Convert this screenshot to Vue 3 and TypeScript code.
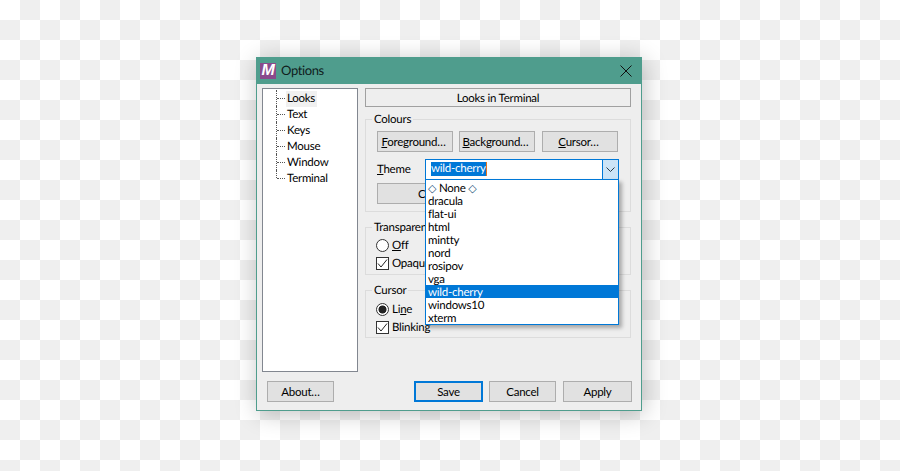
<script setup lang="ts">
import { ref } from 'vue';

const pages = ['Looks', 'Text', 'Keys', 'Mouse', 'Window', 'Terminal'];
const themes = ['dracula', 'flat-ui', 'html', 'mintty', 'nord', 'rosipov', 'vga', 'wild-cherry', 'windows10', 'xterm'];
const selected = ref('wild-cherry');
</script>

<template>
  <div class="desktop">
    <div class="window">
      <div class="titlebar">
        <span class="logo">M</span>
        <span class="title">Options</span>
        <svg class="close" width="12" height="12" viewBox="0 0 12 12">
          <path d="M0.5 0.5 L11.5 11.5 M11.5 0.5 L0.5 11.5" stroke="#111" stroke-width="1" fill="none" />
        </svg>
      </div>
      <div class="content">
        <div class="main">
          <ul class="tree">
            <li v-for="(page, index) in pages" :key="page" class="tree-row">
              <span :class="['tree-label', { current: index === 0 }]">{{ page }}</span>
            </li>
          </ul>
          <div class="panel">
            <div class="heading">Looks in Terminal</div>

            <fieldset class="group colours">
              <legend>Colours</legend>
              <div class="colour-buttons">
                <button class="btn"><u>F</u>oreground…</button>
                <button class="btn"><u>B</u>ackground…</button>
                <button class="btn"><u>C</u>ursor…</button>
              </div>
              <div class="theme-row">
                <label class="theme-label"><u>T</u>heme</label>
                <div class="combo">
                  <span class="combo-value"><span class="combo-selected">{{ selected }}</span><i class="caret"></i></span>
                  <span class="combo-arrow">
                    <svg width="9" height="5" viewBox="0 0 9 5">
                      <path d="M0.5 0.5 L4.5 4.5 L8.5 0.5" stroke="#2b3a46" stroke-width="1" fill="none" />
                    </svg>
                  </span>
                  <ul class="dropdown">
                    <li class="option none"><span class="diamond">◇</span> None <span class="diamond">◇</span></li>
                    <li
                      v-for="theme in themes"
                      :key="theme"
                      :class="['option', { active: theme === selected }]"
                    >
                      {{ theme }}
                    </li>
                  </ul>
                </div>
              </div>
              <button class="btn wide">Colour Scheme Designer…</button>
            </fieldset>

            <fieldset class="group transparency">
              <legend>Transparency</legend>
              <label class="choice first"><span class="radio"></span><span><u>O</u>ff</span></label>
              <label class="choice">
                <span class="check">
                  <svg width="11" height="11" viewBox="0 0 11 11">
                    <path d="M1 5.5 L4 9 L10 1.5" stroke="#222" stroke-width="1" fill="none" />
                  </svg>
                </span>
                <span>Opaque</span>
              </label>
            </fieldset>

            <fieldset class="group cursor">
              <legend>Cursor</legend>
              <label class="choice first"><span class="radio on"></span><span>Li<u>n</u>e</span></label>
              <label class="choice">
                <span class="check">
                  <svg width="11" height="11" viewBox="0 0 11 11">
                    <path d="M1 5.5 L4 9 L10 1.5" stroke="#222" stroke-width="1" fill="none" />
                  </svg>
                </span>
                <span>Blinkin<u>g</u></span>
              </label>
            </fieldset>
          </div>
        </div>
        <div class="footer">
          <button class="btn about">About…</button>
          <span class="spacer"></span>
          <button class="btn save">Save</button>
          <button class="btn cancel">Cancel</button>
          <button class="btn apply">Apply</button>
        </div>
      </div>
    </div>
  </div>
</template>

<style scoped>
.desktop {
  position: relative;
  width: 900px;
  height: 471px;
  overflow: hidden;
  background-color: #fff;
  background-image: conic-gradient(#efefef 25%, #fff 25% 50%, #efefef 50% 75%, #fff 75%);
  background-size: 40px 40px;
  font-family: "Lato", "Noto Sans", sans-serif;
  font-size: 11.5px;
  letter-spacing: -0.25px;
  text-rendering: geometricPrecision;
  color: #000;
}

/* the dialog sits on the desktop like a real window */
.window {
  position: absolute;
  left: 256px;
  top: 57px;
  width: 386px;
  height: 354px;
  box-sizing: border-box;
  display: flex;
  flex-direction: column;
  border: 1px solid #4f9d8d;
  background: #eeeeee;
  box-shadow: 2px 3px 22px rgba(0, 0, 0, 0.24);
}

.titlebar {
  height: 26px;
  flex: none;
  display: flex;
  align-items: center;
  padding: 0 9px 0 3px;
  background: #4f9d8d;
}

.logo {
  width: 16px;
  height: 16px;
  display: flex;
  align-items: center;
  justify-content: center;
  background: #8a4a8c;
  color: #fff;
  font-family: "Liberation Sans", sans-serif;
  font-size: 16px;
  font-weight: 700;
  font-style: italic;
  line-height: 16px;
}

.title {
  flex: 1;
  margin-left: 5px;
  margin-top: -2px;
  font-size: 13px;
  letter-spacing: -0.4px;
  color: #10201c;
}

.close {
  flex: none;
}

.content {
  flex: 1;
  display: flex;
  flex-direction: column;
  padding: 4px 9px 0 5px;
}

.main {
  display: flex;
  gap: 7px;
  height: 284px;
}

.tree {
  width: 96px;
  box-sizing: border-box;
  margin: 0;
  padding: 1px 0 0 13px;
  list-style: none;
  border: 1px solid #828790;
  background: #fff;
}

.tree-row {
  position: relative;
  height: 16px;
  padding-left: 9px;
  border-left: 1px dotted #555;
  line-height: 18px;
}

.tree-row:last-child {
  height: 8px;
}

.tree-row::before {
  content: '';
  position: absolute;
  left: 0;
  top: 8px;
  width: 8px;
  border-top: 1px dotted #555;
}

.tree-label {
  display: inline-block;
  padding: 0 1px;
  line-height: 16px;
  white-space: nowrap;
}

.tree-label.current {
  background: #f0f0f0;
  padding-right: 2px;
}

.panel {
  width: 266px;
  display: flex;
  flex-direction: column;
}

.heading {
  height: 19px;
  box-sizing: border-box;
  border: 1px solid #a0a0a0;
  text-align: center;
  line-height: 19px;
}

.group {
  margin: 0;
  min-width: 0;
  border: 1px solid #dcdcdc;
  padding: 0 11px;
}

.group legend {
  padding: 0 2px;
  margin-left: -5px;
  height: 16px;
  line-height: 18px;
}

.colours {
  height: 101px;
  box-sizing: border-box;
  margin-top: 4px;
  padding-top: 4px;
}

.transparency {
  height: 56px;
  box-sizing: border-box;
  margin-top: 7px;
}

.cursor {
  height: 56px;
  box-sizing: border-box;
  margin-top: 7px;
}

.colour-buttons {
  display: flex;
  gap: 6px;
}

.btn {
  box-sizing: border-box;
  height: 21px;
  padding: 0;
  border: 1px solid #adadad;
  background: #e1e1e1;
  font: inherit;
  letter-spacing: inherit;
  color: inherit;
  white-space: nowrap;
}

.colour-buttons .btn {
  width: 76px;
  padding-right: 3px;
}

.colour-buttons .btn:last-child {
  margin-left: 1px;
}

.theme-row {
  display: flex;
  align-items: center;
  margin-top: 7px;
}

.theme-label {
  width: 48px;
  line-height: 18px;
  padding-top: 1px;
}

.combo {
  position: relative;
  width: 194px;
  height: 21px;
  box-sizing: border-box;
  display: flex;
  border: 1px solid #0078d7;
  background: #fff;
}

.combo-value {
  flex: 1;
  display: flex;
  align-items: center;
  padding-left: 5px;
  padding-bottom: 1px;
}

.combo-selected {
  background: #0078d7;
  color: #fff;
  line-height: 14px;
}

.caret {
  width: 1px;
  height: 14px;
  background: #e8761e;
}

.combo-arrow {
  width: 15px;
  flex: none;
  display: flex;
  align-items: center;
  justify-content: center;
  border-left: 1px solid #0078d7;
  background: #cce4f7;
}

.dropdown {
  position: absolute;
  z-index: 2;
  left: -1px;
  top: 19px;
  width: 194px;
  box-sizing: border-box;
  margin: 0;
  padding: 1px 0 0;
  list-style: none;
  border: 1px solid #0078d7;
  background: #fff;
  box-shadow: 3px 3px 4px rgba(0, 0, 0, 0.3);
}

.option {
  height: 13px;
  padding-left: 2px;
  line-height: 15px;
  white-space: nowrap;
}

.option.none {
  padding-left: 2px;
}

.diamond {
  font-family: "DejaVu Sans", sans-serif;
  font-size: 11px;
  line-height: 12px;
  color: #24527a;
}

.option.active {
  background: #0078d7;
  color: #fff;
}

.btn.wide {
  display: block;
  width: 241px;
  margin-top: 3px;
  padding-left: 40px;
  text-align: left;
}

.choice {
  display: flex;
  align-items: center;
  gap: 3px;
  height: 18px;
  margin-left: -1px;
  white-space: nowrap;
}

.choice.first {
  margin-top: 1px;
}

.cursor .choice.first {
  margin-top: 2px;
}

.radio {
  width: 13px;
  height: 13px;
  box-sizing: border-box;
  flex: none;
  border: 1px solid #333;
  border-radius: 50%;
  background: #fff;
}

.radio.on {
  background: radial-gradient(circle, #222 0 3.6px, #fff 4.4px);
}

.check {
  width: 13px;
  height: 13px;
  box-sizing: border-box;
  flex: none;
  display: flex;
  align-items: center;
  justify-content: center;
  border: 1px solid #333;
  background: #fff;
}

.footer {
  display: flex;
  gap: 6px;
  margin-top: 9px;
  padding-left: 5px;
}

.spacer {
  flex: 1;
}

.about {
  width: 67px;
}

.save {
  width: 69px;
  border: 2px solid #0078d7;
}

.cancel {
  width: 67px;
}

.apply {
  width: 69px;
  margin-left: 1px;
}
</style>
